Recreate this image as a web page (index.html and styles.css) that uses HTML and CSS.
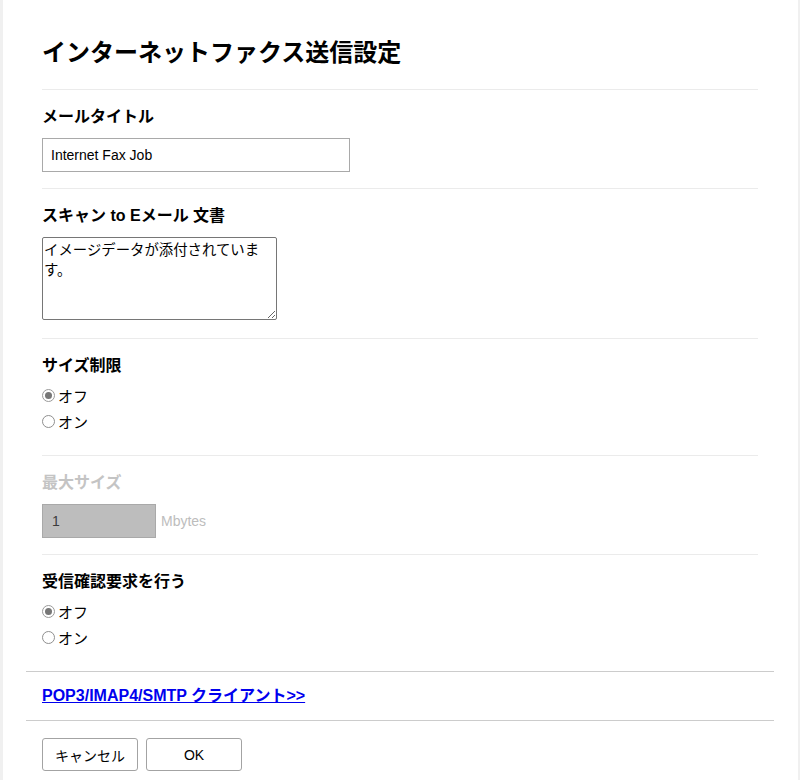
FILE: index.html
```html
<!DOCTYPE html>
<html lang="ja">
<head>
<meta charset="utf-8">
<title>インターネットファクス送信設定</title>
<link rel="stylesheet" href="styles.css">
</head>
<body>
<div class="panel">
  <div class="form">
    <h1 class="title">インターネットファクス送信設定</h1>
    <section class="field">
      <div class="label">メールタイトル</div>
      <input class="text text-title" type="text" value="Internet Fax Job">
    </section>
    <section class="field">
      <div class="label">スキャン to Eメール 文書</div>
      <textarea class="area">イメージデータが添付されています。</textarea>
    </section>
    <section class="field field-radio">
      <div class="label label-radio">サイズ制限</div>
      <label class="radio-row"><input class="radio" type="radio" name="size" checked><span>オフ</span></label>
      <label class="radio-row"><input class="radio" type="radio" name="size"><span>オン</span></label>
    </section>
    <section class="field">
      <div class="label label-disabled">最大サイズ</div>
      <div class="inline">
        <input class="text text-disabled" type="text" value="1" disabled>
        <span class="unit">Mbytes</span>
      </div>
    </section>
    <section class="field field-radio field-last">
      <div class="label label-radio">受信確認要求を行う</div>
      <label class="radio-row"><input class="radio" type="radio" name="mdn" checked><span>オフ</span></label>
      <label class="radio-row"><input class="radio" type="radio" name="mdn"><span>オン</span></label>
    </section>
  </div>
  <div class="linkbar"><a class="link" href="#">POP3/IMAP4/SMTP クライアント&gt;&gt;</a></div>
  <div class="buttons">
    <button class="btn" type="button">キャンセル</button>
    <button class="btn" type="button">OK</button>
  </div>
</div>
</body>
</html>
```
FILE: styles.css
```css
html, body {
  margin: 0;
  padding: 0;
}
body {
  background: #f0f0f0;
  font-family: "Liberation Sans", "Noto Sans CJK JP", sans-serif;
  color: #000;
}
.panel {
  margin-left: 3px;
  width: 795px;
  min-height: 780px;
  box-sizing: border-box;
  padding: 0 24px 0 23px;
  background: #fff;
}
.form {
  padding: 0 16px;
}
.title {
  margin: 0;
  padding: 37px 0 20px;
  font-size: 24px;
  line-height: 32px;
  font-weight: bold;
  border-bottom: 1px solid #ebebeb;
}
.field {
  padding: 16px 0;
  border-bottom: 1px solid #ebebeb;
}
.field-radio {
  padding-bottom: 20px;
}
.field-last {
  border-bottom: none;
}
.label {
  font-size: 16px;
  line-height: 22px;
  font-weight: bold;
  margin-bottom: 10px;
}
.label-radio {
  margin-bottom: 5px;
}
.label-disabled {
  color: #c4c4c4;
}
.text {
  display: block;
  box-sizing: border-box;
  height: 34px;
  margin: 0;
  padding: 0 8px;
  border: 1px solid #a9a9a9;
  border-radius: 0;
  font-family: "Liberation Sans", "Noto Sans CJK JP", sans-serif;
  font-size: 14px;
  color: #000;
  background: #fff;
  outline: none;
}
.text-title {
  width: 308px;
}
.text-disabled {
  width: 114px;
  padding-left: 9px;
  background: #bdbdbd;
  color: #3c3c3c;
  -webkit-text-fill-color: #3c3c3c;
}
.inline {
  display: flex;
  align-items: center;
  gap: 5px;
}
.unit {
  font-size: 14px;
  color: #bdbdbd;
}
.area {
  display: block;
  box-sizing: border-box;
  width: 235px;
  height: 83px;
  margin: 0 0 2px;
  padding: 1px 3px 1px 1px;
  border: 1px solid #767676;
  border-radius: 2px;
  font-family: "Noto Sans CJK JP", sans-serif;
  font-size: 14.4px;
  line-height: 20px;
  color: #000;
  resize: both;
  outline: none;
}
.radio-row {
  display: flex;
  align-items: center;
  gap: 3px;
  height: 26px;
  font-size: 15px;
}
.radio-row:last-child {
  margin-bottom: 1px;
}
.radio {
  -webkit-appearance: none;
  appearance: none;
  box-sizing: border-box;
  width: 13px;
  height: 13px;
  margin: 0;
  border: 1px solid #8f8f8f;
  border-radius: 50%;
  background: #fff;
  display: grid;
  place-content: center;
}
.radio:checked {
  border-color: #9a9a9a;
}
.radio:checked::before {
  content: "";
  width: 7px;
  height: 7px;
  border-radius: 50%;
  background: #777;
}
.linkbar {
  border-top: 1px solid #cccccc;
  border-bottom: 1px solid #cccccc;
  padding: 13px 16px;
  line-height: 22px;
}
.link {
  font-size: 16px;
  font-weight: bold;
  color: #0000ee;
  text-decoration: underline;
}
.buttons {
  display: flex;
  gap: 8px;
  padding: 17px 16px 0;
}
.btn {
  box-sizing: border-box;
  width: 96px;
  height: 33px;
  margin: 0;
  padding: 0;
  border: 1px solid #a3a3a3;
  border-radius: 3px;
  background: #fff;
  font-family: "Liberation Sans", "Noto Sans CJK JP", sans-serif;
  font-size: 14px;
  color: #000;
}
```
